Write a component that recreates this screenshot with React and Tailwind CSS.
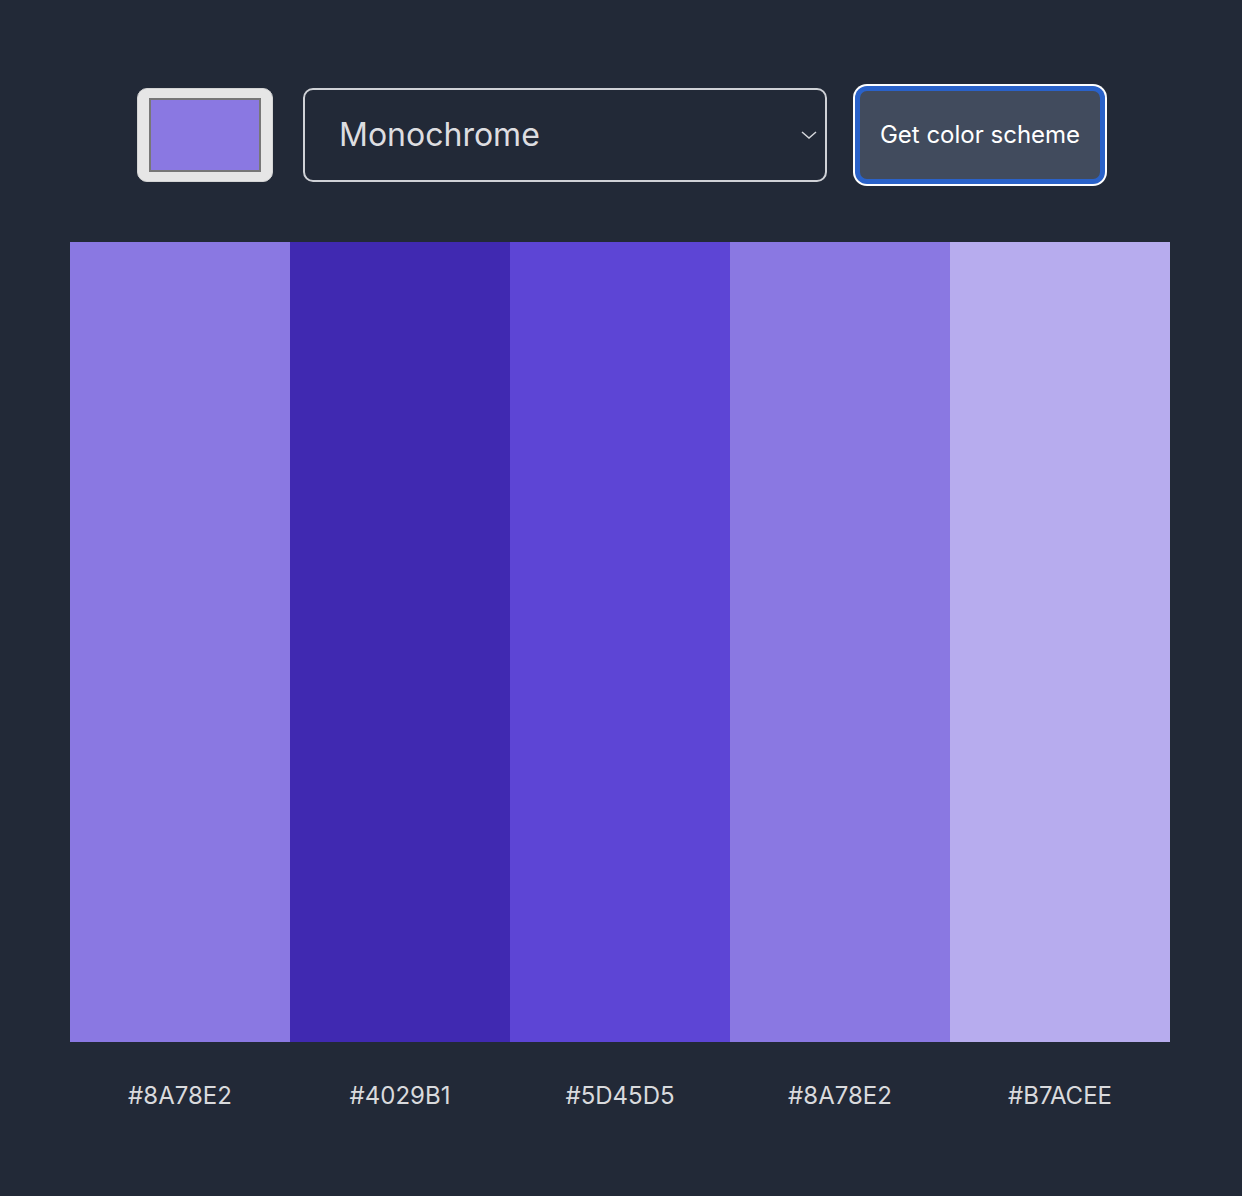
import { useState } from 'react';

const colors = ['#8A78E2', '#4029B1', '#5D45D5', '#8A78E2', '#B7ACEE'];

const App = () => {
  const [mode, setMode] = useState('monochrome');

  return (
    <div className="min-h-[1196px] bg-[#222937] pt-[88px] font-['Inter','Liberation_Sans',sans-serif]">
      {/* Controls */}
      <div className="flex items-center pl-[137px] gap-[30px]">
        <div className="w-[136px] h-[94px] rounded-[10px] bg-[#e6e6e6] border border-[#d4d4d4] px-[11px] py-[9px]">
          <div className="w-full h-full bg-[#8A78E2] border-2 border-[#777777]"></div>
        </div>
        <div className="relative w-[524px] h-[94px]">
          <select
            value={mode}
            onChange={e => setMode(e.target.value)}
            className="appearance-none w-full h-full bg-transparent border-2 border-[#cfd1d6] rounded-[10px] pl-[34px] text-[32px] text-[#dddde0] outline-none"
          >
            <option value="monochrome">Monochrome</option>
            <option value="analogic">Analogic</option>
            <option value="complement">Complement</option>
          </select>
          <svg
            className="absolute right-[8px] top-1/2 -translate-y-1/2 w-[20px] h-[20px] pointer-events-none"
            viewBox="0 0 20 20"
            fill="none"
            stroke="#d4d6da"
            strokeWidth="1.5"
          >
            <path d="M3 7l7 6 7-6" />
          </svg>
        </div>
        <button className="w-[246px] h-[94px] rounded-[10px] bg-[#414b5d] border-[3px] border-[#2a62c9] shadow-[0_0_0_2px_#2a62c9,0_0_0_4px_#ffffff] text-white text-[24px]">
          Get color scheme
        </button>
      </div>

      {/* Palette */}
      <div className="w-[1100px] ml-[70px] mt-[60px]">
        <div className="grid grid-cols-5 h-[800px]">
          {colors.map((c, idx) => (
            <div key={idx} className="h-full" style={{ backgroundColor: c }}></div>
          ))}
        </div>
        <div className="grid grid-cols-5 mt-[38px]">
          {colors.map((c, idx) => (
            <p key={idx} className="text-center text-[24px] leading-8 text-[#d9dadd]">{c}</p>
          ))}
        </div>
      </div>
    </div>
  );
};

export default App;
